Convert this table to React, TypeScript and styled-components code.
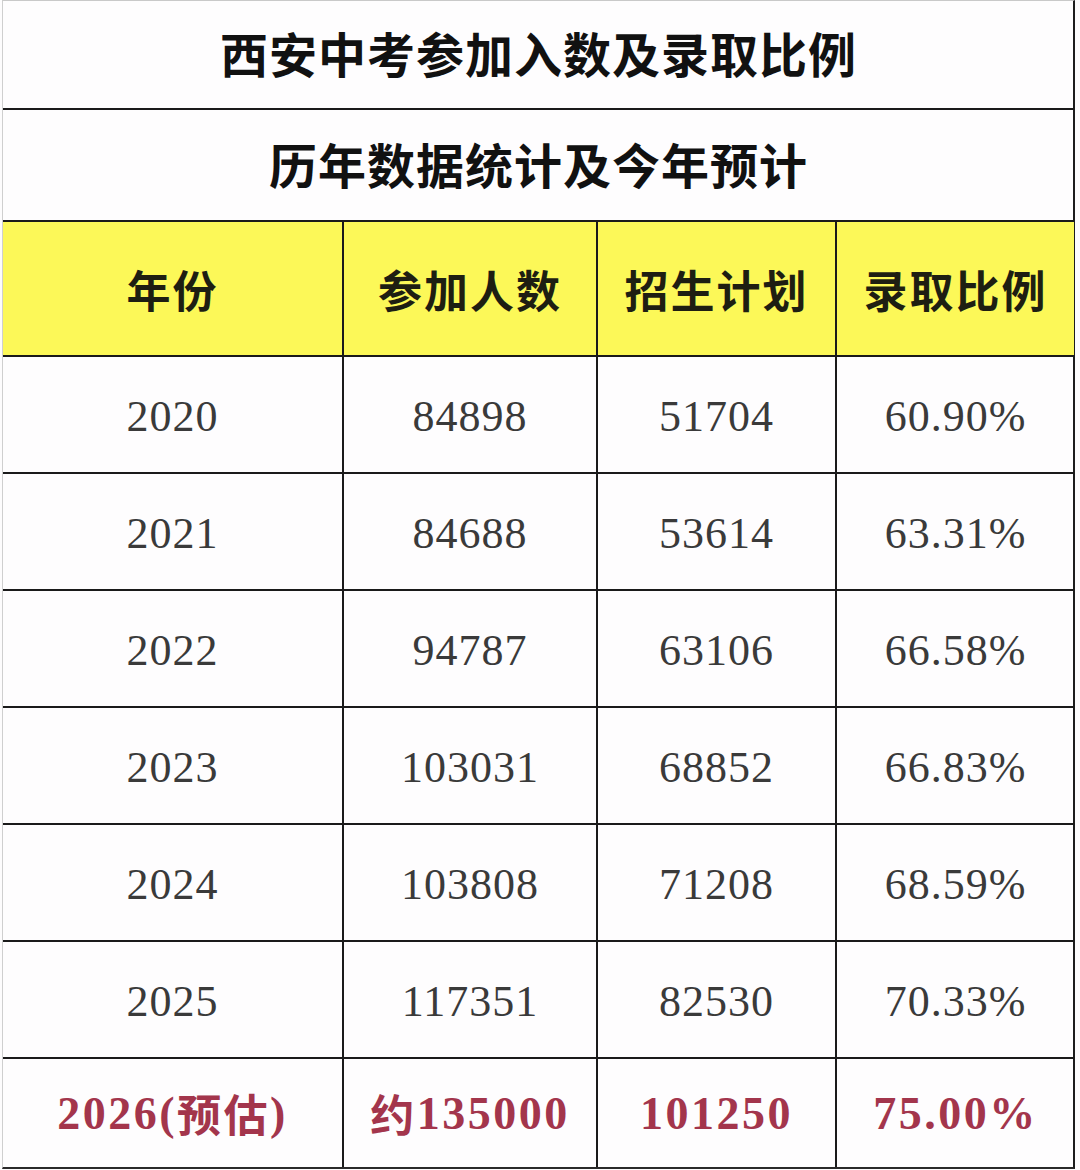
import React from "react";
import styled, { createGlobalStyle } from "styled-components";

const GlobalStyle = createGlobalStyle`
  html, body {
    margin: 0;
    padding: 0;
    background: #ffffff;
  }
  * { box-sizing: border-box; }
`;

const Page = styled.div`
  width: 1080px;
  height: 1170px;
  padding-left: 2px;
  background: #fdfcfd;
  overflow: hidden;
`;

const Table = styled.div`
  width: 1073px;
  display: grid;
  grid-template-columns: 341px 254px 239px 237px;
  border-left: 1px solid #cfcfcf;
  border-top: 1px solid #c9c9c9;
  border-right: 2px solid #1d1d1d;
  border-bottom: 2px solid #2a2a2a;
  background: #fefdfe;
`;

const TitleCell = styled.div<{ $h: number }>`
  grid-column: 1 / -1;
  height: ${(p) => p.$h}px;
  display: flex;
  align-items: center;
  justify-content: center;
  padding-bottom: 5px;
  border-bottom: 2px solid #1a1a1a;
  font-family: "Noto Sans CJK SC", "Noto Sans", sans-serif;
  font-weight: 700;
  font-size: 48px;
  letter-spacing: 1px;
  color: #111111;
`;

const Cell = styled.div<{ $h: number; $last?: boolean; $kind: "head" | "data" | "est" }>`
  height: ${(p) => p.$h}px;
  display: flex;
  align-items: center;
  justify-content: center;
  border-right: ${(p) => (p.$last ? "none" : "2px solid #1a1a1a")};
  border-bottom: ${(p) => (p.$kind === "est" ? "none" : "2px solid #1a1a1a")};
  background: ${(p) => (p.$kind === "head" ? "#fcf858" : "transparent")};
  font-family: ${(p) =>
    p.$kind === "head"
      ? `"Noto Sans CJK SC", "Noto Sans", sans-serif`
      : `"Liberation Serif", "Noto Sans CJK SC", serif`};
  font-weight: ${(p) => (p.$kind === "data" ? 400 : 700)};
  font-size: ${(p) => (p.$kind === "head" ? 44 : p.$kind === "est" ? 46 : 44)}px;
  letter-spacing: ${(p) => (p.$kind === "head" ? 2 : p.$kind === "est" ? 2.5 : 1)}px;
  color: ${(p) => (p.$kind === "head" ? "#1e1e12" : p.$kind === "est" ? "#a3354c" : "#3a3a3a")};
  padding-top: ${(p) => (p.$kind === "data" ? 4 : 0)}px;
`;

const EstCjk = styled.span`
  font-family: "Noto Sans CJK SC", sans-serif;
  font-weight: 700;
  font-size: 44px;
`;

const headers = ["年份", "参加人数", "招生计划", "录取比例"];

const rows: string[][] = [
  ["2020", "84898", "51704", "60.90%"],
  ["2021", "84688", "53614", "63.31%"],
  ["2022", "94787", "63106", "66.58%"],
  ["2023", "103031", "68852", "66.83%"],
  ["2024", "103808", "71208", "68.59%"],
  ["2025", "117351", "82530", "70.33%"],
];

const rowHeights = [117, 117, 117, 117, 117, 117];

export default function App() {
  return (
    <>
      <GlobalStyle />
      <Page>
        <Table>
          <TitleCell $h={109}>西安中考参加入数及录取比例</TitleCell>
          <TitleCell $h={112}>历年数据统计及今年预计</TitleCell>
          {headers.map((h, i) => (
            <Cell key={h} $h={135} $kind="head" $last={i === 3}>
              {h}
            </Cell>
          ))}
          {rows.map((r, ri) =>
            r.map((v, ci) => (
              <Cell key={`${ri}-${ci}`} $h={rowHeights[ri]} $kind="data" $last={ci === 3}>
                {v}
              </Cell>
            ))
          )}
          <Cell $h={108} $kind="est">
            2026(<EstCjk>预估</EstCjk>)
          </Cell>
          <Cell $h={108} $kind="est">
            <EstCjk>约</EstCjk>135000
          </Cell>
          <Cell $h={108} $kind="est">
            101250
          </Cell>
          <Cell $h={108} $kind="est" $last>
            75.00%
          </Cell>
        </Table>
      </Page>
    </>
  );
}
